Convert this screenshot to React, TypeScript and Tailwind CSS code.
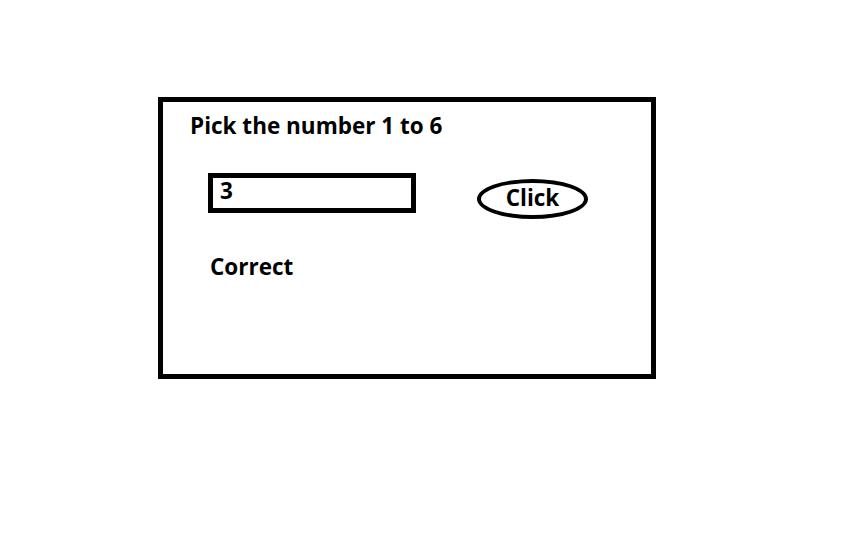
import React, { useState } from 'react';

const FONT = { fontFamily: '"Open Sans", Lato, sans-serif' };

export default function App() {
  const [value, setValue] = useState('3');
  const [result, setResult] = useState('Correct');

  const check = () => {
    const n = Number(value);
    setResult(n >= 1 && n <= 6 ? 'Correct' : 'Wrong');
  };

  return (
    <div className="w-[864px] h-[540px] bg-white pt-[97px] pl-[158px] text-black font-bold text-[22.5px]" style={FONT}>
      <div className="w-[498px] h-[282px] border-[5px] border-black flex flex-col">
        <h1 className="leading-[22px] mt-[13px] ml-[27px]">Pick the number 1 to 6</h1>

        <div className="flex items-start mt-[36px] ml-[45px]">
          <input
            value={value}
            onChange={e => setValue(e.target.value)}
            className="w-[208px] h-[40px] border-[5px] border-black pl-[7px] pt-[0px] pb-[5px] leading-[22px] outline-none font-bold"
            style={FONT}
          />
          <button
            onClick={check}
            className="ml-[61px] mt-[6px] w-[111px] h-[40px] border-[4px] border-black rounded-[50%] flex items-center justify-center leading-[22px] font-bold pb-[2px]"
          >
            Click
          </button>
        </div>

        <p className="leading-[22px] mt-[37px] ml-[47px]">{result}</p>
      </div>
    </div>
  );
}
